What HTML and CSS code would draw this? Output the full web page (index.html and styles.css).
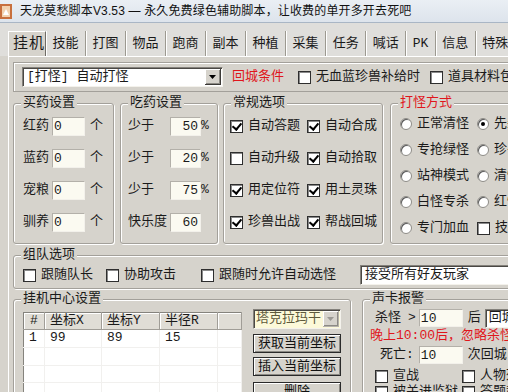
FILE: index.html
```html
<!DOCTYPE html>
<html lang="zh-CN">
<head>
    <meta charset="UTF-8">
    <title>天龙莫愁脚本V3.53</title>
    <link rel="stylesheet" href="styles.css">
</head>
<body>
    <div class="titlebar">
        <svg class="app-icon" width="12" height="15" viewBox="0 0 12 15">
            <rect x="0" y="0" width="12" height="15" fill="#c8703e"/>
            <rect x="2" y="2" width="8" height="11" fill="#f2d2b0"/>
            <path d="M3 11 L6 5 L9 11 Z" fill="#ffffff"/>
        </svg>
        <span class="title">天龙莫愁脚本V3.53 — 永久免费绿色辅助脚本，让收费的单开多开去死吧</span>
    </div>

    <div class="tabs">
        <span class="tab active">挂机</span>
        <span class="tab">技能</span>
        <span class="tab">打图</span>
        <span class="tab">物品</span>
        <span class="tab">跑商</span>
        <span class="tab">副本</span>
        <span class="tab">种植</span>
        <span class="tab">采集</span>
        <span class="tab">任务</span>
        <span class="tab">喊话</span>
        <span class="tab">PK</span>
        <span class="tab">信息</span>
        <span class="tab">特殊</span>
    </div>

    <div class="page">
        <div class="top-row">
            <div class="combo mode">
                <span class="combo-text">[打怪] 自动打怪</span>
                <span class="combo-btn"><svg width="7" height="4" viewBox="0 0 7 4"><path d="M0 0h7L3.5 4z" fill="#000"/></svg></span>
            </div>
            <span class="red back-cond">回城条件</span>
            <label class="check gap-a"><span class="cb"></span>无血蓝珍兽补给时</label>
            <label class="check gap-b"><span class="cb"></span>道具材料包满时</label>
        </div>

        <div class="groups">
            <fieldset class="group buy">
                <legend>买药设置</legend>
                <div class="buy-grid">
                    <span>红药</span><span class="field">0</span><span>个</span>
                    <span>蓝药</span><span class="field">0</span><span>个</span>
                    <span>宠粮</span><span class="field">0</span><span>个</span>
                    <span>驯养</span><span class="field">0</span><span>个</span>
                </div>
            </fieldset>

            <fieldset class="group drink">
                <legend>吃药设置</legend>
                <div class="drink-grid">
                    <span>少于</span><span class="field num">50</span><span>%</span>
                    <span>少于</span><span class="field num">20</span><span>%</span>
                    <span>少于</span><span class="field num">75</span><span>%</span>
                    <span>快乐度</span><span class="field num">60</span><span></span>
                </div>
            </fieldset>

            <fieldset class="group normal">
                <legend>常规选项</legend>
                <div class="normal-grid">
                    <label class="check"><span class="cb on"></span>自动答题</label>
                    <label class="check"><span class="cb on"></span>自动合成</label>
                    <label class="check"><span class="cb"></span>自动升级</label>
                    <label class="check"><span class="cb on"></span>自动拾取</label>
                    <label class="check"><span class="cb on"></span>用定位符</label>
                    <label class="check"><span class="cb on"></span>用土灵珠</label>
                    <label class="check"><span class="cb on"></span>珍兽出战</label>
                    <label class="check"><span class="cb on"></span>帮战回城</label>
                </div>
            </fieldset>

            <fieldset class="group fight">
                <legend class="red">打怪方式</legend>
                <div class="fight-grid">
                    <label class="check"><span class="rb"></span>正常清怪</label>
                    <label class="check"><span class="rb on"></span>先杀红怪</label>
                    <label class="check"><span class="rb"></span>专抢绿怪</label>
                    <label class="check"><span class="rb"></span>珍兽模式</label>
                    <label class="check"><span class="rb"></span>站神模式</label>
                    <label class="check"><span class="rb"></span>清怪模式</label>
                    <label class="check"><span class="rb"></span>白怪专杀</label>
                    <label class="check"><span class="rb"></span>红怪优先</label>
                    <label class="check"><span class="rb"></span>专门加血</label>
                    <label class="check"><span class="cb"></span>技能优先</label>
                </div>
            </fieldset>
        </div>

        <fieldset class="group team">
            <legend>组队选项</legend>
            <div class="team-row">
                <label class="check"><span class="cb"></span>跟随队长</label>
                <label class="check"><span class="cb"></span>协助攻击</label>
                <label class="check"><span class="cb"></span>跟随时允许自动选怪</label>
                <div class="combo friends"><span class="combo-text">接受所有好友玩家</span></div>
            </div>
        </fieldset>

        <div class="bottom">
            <fieldset class="group center">
                <legend>挂机中心设置</legend>
                <div class="center-body">
                    <table class="coords">
                        <colgroup>
                            <col style="width:21px"><col style="width:57px"><col style="width:58px"><col style="width:58px"><col style="width:24px">
                        </colgroup>
                        <thead>
                            <tr><th>#</th><th>坐标X</th><th>坐标Y</th><th>半径R</th><th></th></tr>
                        </thead>
                        <tbody>
                            <tr><td>1</td><td>99</td><td>89</td><td>15</td><td></td></tr>
                            <tr><td></td><td></td><td></td><td></td><td></td></tr>
                            <tr><td></td><td></td><td></td><td></td><td></td></tr>
                            <tr><td></td><td></td><td></td><td></td><td></td></tr>
                        </tbody>
                    </table>
                    <div class="side">
                        <div class="combo map">
                            <span class="combo-text">塔克拉玛干</span>
                            <span class="combo-btn off"><svg width="7" height="4" viewBox="0 0 7 4"><path d="M0 0h7L3.5 4z" fill="#9a9893"/></svg></span>
                        </div>
                        <button class="btn">获取当前坐标</button>
                        <button class="btn">插入当前坐标</button>
                        <button class="btn del">删除</button>
                    </div>
                </div>
            </fieldset>

            <fieldset class="group sound">
                <legend>声卡报警</legend>
                <div class="sound-body">
                    <div class="sound-line">
                        <span>杀怪</span><span class="gt">&gt;</span>
                        <span class="field small">10</span>
                        <span class="after">后</span>
                        <div class="combo back"><span class="combo-text">回城</span></div>
                    </div>
                    <div class="red night">晚上10:00后，忽略杀怪次数</div>
                    <div class="sound-line death">
                        <span>死亡:</span>
                        <span class="field small">10</span>
                        <span class="after">次回城</span>
                    </div>
                    <div class="alarm-grid">
                        <label class="check"><span class="cb"></span>宣战</label>
                        <label class="check"><span class="cb"></span>人物死亡</label>
                        <label class="check"><span class="cb"></span>被关进监狱</label>
                        <label class="check"><span class="cb"></span>答题超时</label>
                    </div>
                </div>
            </fieldset>
        </div>
    </div>
</body>
</html>
```

FILE: styles.css
```css
* {
    box-sizing: border-box;
}
html, body {
    margin: 0;
}
body {
    width: 508px;
    height: 392px;
    overflow: hidden;
    background-color: #d6d3cc;
    font: 13px/16px "Liberation Mono", "Noto Sans CJK SC", monospace;
    color: #1a1a1a;
    white-space: nowrap;
}
.titlebar {
    height: 23px;
    display: flex;
    align-items: center;
    gap: 8px;
    background: linear-gradient(#eaeff4, #dde4ec);
    border-bottom: 1px solid #a9b6c5;
    font: 12px/16px "Liberation Sans", "Noto Sans CJK SC", sans-serif;
    letter-spacing: 0.15px;
    color: #111;
}
.app-icon {
    flex: none;
}
.tabs {
    display: flex;
    height: 33px;
    padding: 8px 0 0 8px;
    background-color: #dfdedb;
}
.tab {
    flex: none;
    height: 25px;
    line-height: 25px;
    padding: 0 6.5px;
    border-right: 1px solid #9c9990;
    box-shadow: 1px 0 0 #fff;
}
.tab.active {
    font-size: 15px;
    letter-spacing: 1px;
    padding: 0 0 0 4px;
    background-color: #d6d3cc;
    border-left: 1px solid #fff;
    border-top: 1px solid #fff;
    border-right: 1px solid #6f6c66;
}
.page {
    margin-left: 8px;
    border-top: 1px solid #fff;
    border-left: 1px solid #fff;
    padding: 5px 0 0 4px;
}
.red {
    color: #e0161c;
}

/* top line */
.top-row {
    display: flex;
    align-items: center;
    height: 30px;
    padding-left: 8px;
    border: 1px solid #a3a09a;
    border-right: none;
    box-shadow: inset 1px 1px 0 #fff;
}
.top-row > *,
.groups > *,
.bottom > *,
.center-body > *,
.sound-line > * {
    flex: none;
}
.back-cond {
    margin-left: 9px;
}
.gap-a {
    margin-left: 14px;
}
.gap-b {
    margin-left: 10px;
}

/* controls */
.combo {
    display: flex;
    align-items: center;
    height: 20px;
    background-color: #fff;
    border: 1px solid;
    border-color: #84817b #f4f2ec #f4f2ec #84817b;
    box-shadow: inset 1px 1px 0 #4a4844;
}
.combo-text {
    flex: 1;
    padding-left: 4px;
    overflow: hidden;
}
.combo-btn {
    width: 16px;
    height: 16px;
    margin-right: 1px;
    display: flex;
    align-items: center;
    justify-content: center;
    background-color: #d6d3cc;
    border-right: 1px solid #3c3a37;
    border-bottom: 1px solid #3c3a37;
    box-shadow: inset 1px 1px 0 #fff, inset -1px -1px 0 #8c8a84;
}
.mode {
    width: 201px;
}
.field {
    height: 19px;
    line-height: 18px;
    padding: 0 1px;
    background-color: #fbfaf1;
    border: 1px solid;
    border-color: #b3b0a9 #f3f1eb #f3f1eb #b3b0a9;
}
.field.num {
    text-align: right;
    padding-right: 2px;
}
.check {
    display: flex;
    align-items: center;
    gap: 5px;
}
.cb {
    position: relative;
    width: 13px;
    height: 13px;
    flex: none;
    background-color: #fff;
    border: 1px solid #2e2e2e;
    box-shadow: inset 1px 1px 0 #8a8a8a;
}
.cb.on::after {
    content: "";
    position: absolute;
    left: 3px;
    top: 0;
    width: 4px;
    height: 7px;
    border: solid #000;
    border-width: 0 2px 2px 0;
    transform: rotate(40deg);
}
.rb {
    position: relative;
    width: 12px;
    height: 12px;
    flex: none;
    border-radius: 50%;
    background-color: #fff;
    border: 1px solid #8e8c87;
    box-shadow: inset 1px 1px 0 #5a5a5a;
}
.rb.on::after {
    content: "";
    position: absolute;
    left: 3px;
    top: 3px;
    width: 4px;
    height: 4px;
    border-radius: 50%;
    background-color: #000;
}
.btn {
    height: 19px;
    padding: 0;
    font: inherit;
    color: #111;
    background-color: #d6d3cc;
    border: 1px solid #2a2a2a;
    box-shadow: inset 1px 1px 0 #fff, inset -1px -1px 0 #8c8a84;
}

/* group boxes */
.group {
    margin: 0;
    padding: 0;
    min-width: 0;
    border: 1px solid #a3a09a;
    border-radius: 3px;
    box-shadow: inset 1px 1px 0 #fff, 1px 1px 0 #fff;
}
.group legend {
    margin-left: 7px;
    padding: 0 2px;
    line-height: 16px;
    background-color: #d6d3cc;
}
.groups {
    display: flex;
    margin-top: 3px;
}
.buy {
    width: 101px;
}
.buy-grid {
    display: grid;
    grid-template-columns: 29px 38px auto;
    grid-auto-rows: 20px;
    row-gap: 12px;
    align-items: center;
    padding: 5px 0 11px 9px;
}
.buy-grid .field {
    width: 33px;
}
.drink {
    width: 98px;
    margin-left: 6px;
}
.drink-grid {
    display: grid;
    grid-template-columns: 42px 31px auto;
    grid-auto-rows: 20px;
    row-gap: 12px;
    align-items: center;
    padding: 5px 0 0 7px;
}
.normal {
    width: 160px;
    margin-left: 5px;
}
.normal-grid {
    display: grid;
    grid-template-columns: 77px auto;
    grid-auto-rows: 20px;
    row-gap: 12px;
    align-items: center;
    padding: 5px 0 0 6px;
}
.fight {
    width: 140px;
    margin-left: 7px;
}
.fight-grid {
    display: grid;
    grid-template-columns: 77px auto;
    grid-auto-rows: 16px;
    row-gap: 10px;
    align-items: center;
    padding: 5px 0 0 9px;
}

.team {
    width: 520px;
    margin-top: 3px;
}
.team-row {
    display: grid;
    grid-template-columns: 83px 95px 159px 170px;
    height: 25px;
    align-items: center;
    padding: 2px 0 3px 9px;
}
.friends {
    width: 170px;
}

/* bottom area */
.bottom {
    display: flex;
    margin-top: 2px;
}
.center {
    width: 338px;
    height: 120px;
}
.center-body {
    display: flex;
    gap: 11px;
    padding: 5px 10px 0 9px;
}
.coords {
    width: 218px;
    table-layout: fixed;
    border-collapse: collapse;
    border: 1px solid #85837d;
    background-color: #fff;
}
.coords th {
    height: 17px;
    padding: 0 0 0 5px;
    text-align: left;
    font-weight: normal;
    background-color: #e0ddd6;
    border-right: 1px solid #a09d97;
    border-bottom: 1px solid #a09d97;
    box-shadow: inset 1px 1px 0 #fff;
}
.coords th:first-child {
    padding-left: 6px;
}
.coords td {
    height: 17px;
    padding: 0 0 0 5px;
    border-right: 1px solid #f1f0ee;
    border-bottom: 1px solid #f1f0ee;
}
.side {
    width: 88px;
    margin-top: -3px;
    display: flex;
    flex-direction: column;
    gap: 4px;
}
.side .btn:first-of-type {
    margin-top: 1px;
}
.side .del {
    margin-top: 2px;
}
.map {
    background-color: #fcf9d9;
    color: #5f5a3c;
}
.map .combo-text {
    padding-left: 2px;
}
.combo-btn.off {
    border-color: #b5b2ab;
}

.sound {
    width: 160px;
    height: 120px;
    margin-left: 11px;
}
.sound-body {
    padding: 2px 0 0 12px;
}
.sound-line {
    display: flex;
    align-items: center;
    height: 18px;
}
.sound-line .field.small {
    width: 44px;
    height: 18px;
    padding-left: 1px;
}
.gt {
    margin: 0 3px 0 7px;
}
.after {
    margin-left: 5px;
}
.back {
    width: 60px;
    height: 19px;
    margin-left: 4px;
}
.back .combo-text {
    padding-left: 3px;
}
.night {
    height: 16px;
    margin: 1px 0 0 -5px;
}
.death {
    margin-top: 2px;
    padding-left: 5px;
}
.death .field.small {
    margin-left: 5px;
}
.alarm-grid {
    display: grid;
    grid-template-columns: 87px auto;
    grid-auto-rows: 14px;
    row-gap: 2px;
    margin-top: 5px;
}
```
